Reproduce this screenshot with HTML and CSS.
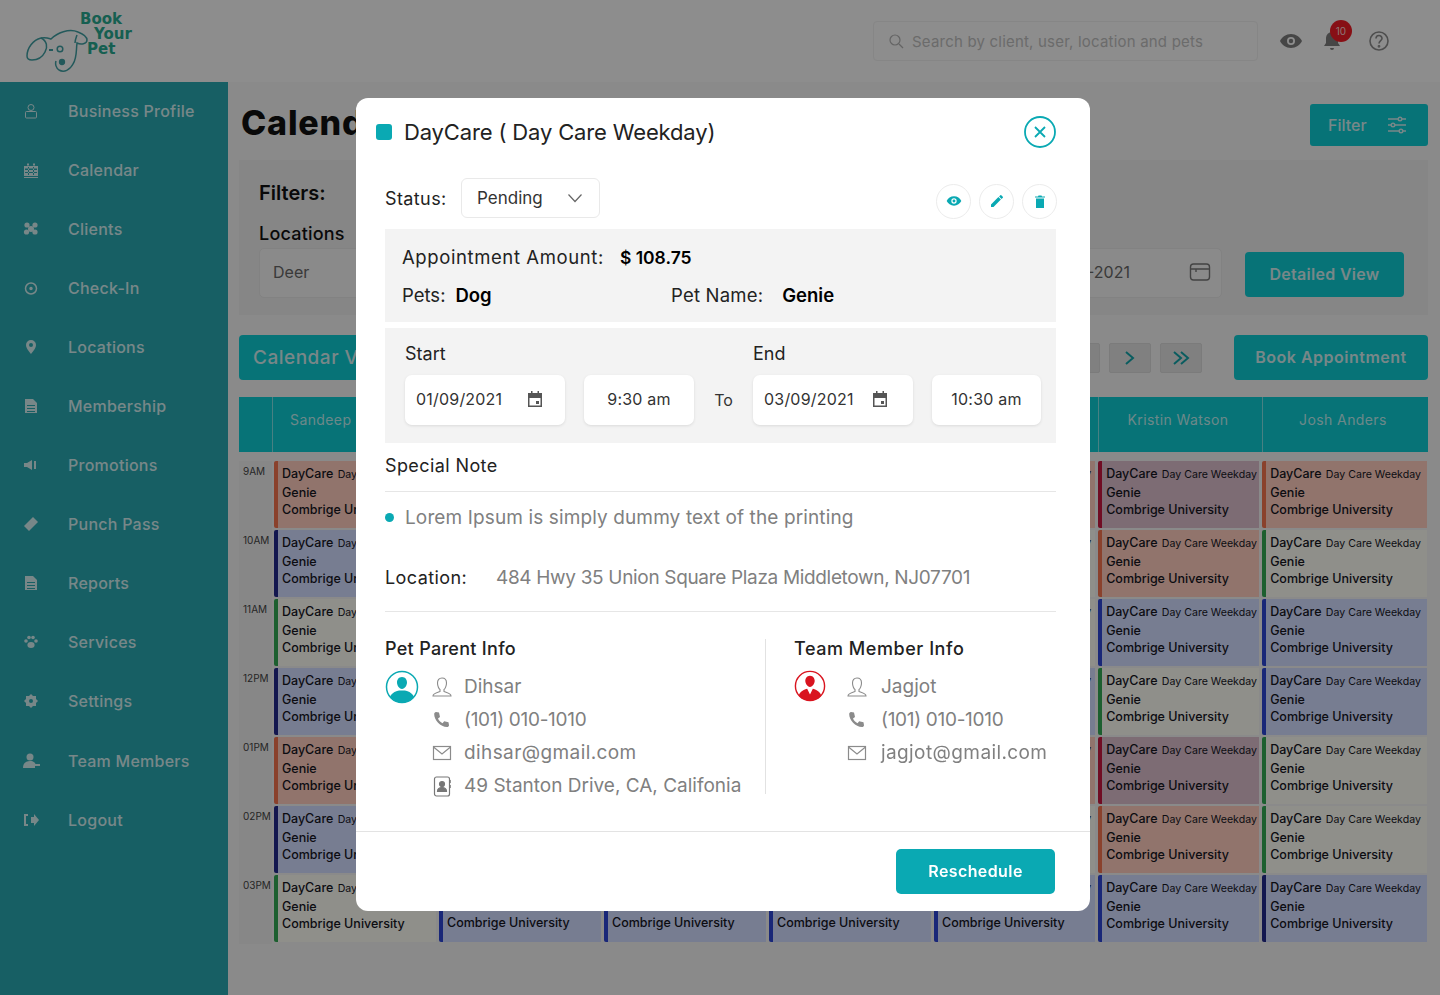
FILE: index.html
```html
<!DOCTYPE html>
<html lang="en">
<head>
    <meta charset="UTF-8">
    <meta name="viewport" content="width=device-width, initial-scale=1.0">
    <title>Book Your Pet - Calendar</title>
    <link rel="stylesheet" href="styles.css">
</head>
<body>
    <header class="topbar">
        <div class="logo">
            <svg class="logo-dog" width="66" height="50" viewBox="0 0 66 50" fill="none" stroke="#3f9da0" stroke-width="1.500">
                <path d="M2 33c0-8 6-16 14-18 5-1 7 0 10 1 6-6 18-11 27-7 5 2 9 5 9 8 0 4-6 5-10 3-1 8 0 15-4 21-3 6-9 9-14 6-3-2-4-6-3-9"/>
                <path d="M16 15c6 3 7 9 4 14-3 6-8 8-13 8-3 0-5-1-5-4"/>
                <path d="M24 27h4" stroke-width="2"/>
                <circle cx="35" cy="26" r="2.800"/>
                <path d="M52 12c-1 3-2 5-2 8"/>
                <circle cx="37" cy="39" r="2.400" fill="#3f9da0"/>
            </svg>
            <div class="logo-text">
                <span class="logo-l1">Book</span>
                <span class="logo-l2">Your</span>
                <span class="logo-l3">Pet</span>
            </div>
        </div>
        <div class="top-right">
            <div class="search">
                <svg width="16" height="16" viewBox="0 0 16 16" fill="none" stroke="#b0b0b0" stroke-width="1.200"><circle cx="7" cy="7" r="5"/><path d="M11 11l4 4"/></svg>
                <span>Search by client, user, location and pets</span>
            </div>
            <svg class="top-icon" width="24" height="24" viewBox="0 0 24 24" fill="#7c7c7c"><path d="M12 5C7 5 3 8 1 12c2 4 6 7 11 7s9-3 11-7c-2-4-6-7-11-7zm0 11a4 4 0 110-8 4 4 0 010 8z"/><circle cx="12" cy="12" r="2.200"/></svg>
            <div class="bell">
                <svg width="20" height="22" viewBox="0 0 20 22" fill="#7c7c7c"><path d="M10 2a6 6 0 00-6 6v5l-2 3h16l-2-3V8a6 6 0 00-6-6zM8 18a2 2 0 004 0z"/></svg>
                <span class="badge">10</span>
            </div>
            <svg class="top-icon" width="22" height="22" viewBox="0 0 22 22" fill="none" stroke="#8a8a8a" stroke-width="1.600"><circle cx="11" cy="11" r="9"/><path d="M8 8.500a3 3 0 116 0c0 2-3 2.400-3 5"/><circle cx="11" cy="16.300" r=".6"/></svg>
        </div>
    </header>

    <div class="layout">
        <nav class="sidebar">
            <a class="nav-item"><svg class="nav-icon" viewBox="0 0 16 16" fill="none" stroke="currentColor"><circle cx="8" cy="4.500" r="3"/><rect x="2.500" y="8.500" width="11" height="6.500" rx="1"/></svg>Business Profile</a>
            <a class="nav-item"><svg class="nav-icon" viewBox="0 0 16 16" fill="currentColor"><path fill-rule="evenodd" d="M1 4h14v10H1zM4 1.500h2V3.500H4zM10 1.500h2V3.500h-2zM2 6.500v1.500h12V6.500zM2 10v1h12v-1zM5 5v8h1V5zM10 5v8h1V5z"/><path d="M1 15h14v1H1z"/></svg>Calendar</a>
            <a class="nav-item"><svg class="nav-icon" viewBox="0 0 16 16" fill="currentColor"><circle cx="4" cy="4" r="2.600"/><circle cx="12" cy="4" r="2.600"/><circle cx="3.500" cy="11" r="2.600"/><circle cx="12" cy="11" r="2.600"/><circle cx="8" cy="8" r="3"/></svg>Clients</a>
            <a class="nav-item"><svg class="nav-icon" viewBox="0 0 16 16" fill="none" stroke="currentColor" stroke-width="1.500"><circle cx="8" cy="8.500" r="5.500"/><circle cx="8" cy="8.500" r="1" fill="currentColor"/></svg>Check-In</a>
            <a class="nav-item"><svg class="nav-icon" viewBox="0 0 16 16" fill="currentColor"><path d="M8 1a5 5 0 00-5 5c0 3.500 5 9 5 9s5-5.500 5-9a5 5 0 00-5-5zm0 7a2 2 0 110-4 2 2 0 010 4z"/></svg>Locations</a>
            <a class="nav-item"><svg class="nav-icon" viewBox="0 0 16 16" fill="currentColor"><path d="M2 1h8l4 4v10H2zM4 7v1h8V7zm0 3v1h8v-1zm0 3v1h8v-1z"/></svg>Membership</a>
            <a class="nav-item"><svg class="nav-icon" viewBox="0 0 16 16" fill="currentColor"><path d="M1 6h3l5-3v10L4 10H1zM11 4h2v8h-2z"/></svg>Promotions</a>
            <a class="nav-item"><svg class="nav-icon" viewBox="0 0 16 16" fill="currentColor"><path d="M10 1l5 5-9 9-5-5z"/></svg>Punch Pass</a>
            <a class="nav-item"><svg class="nav-icon" viewBox="0 0 16 16" fill="currentColor"><path d="M2 1h8l4 4v10H2zM4 7v1h8V7zm0 3v1h8v-1zm0 3v1h8v-1z"/></svg>Reports</a>
            <a class="nav-item"><svg class="nav-icon" viewBox="0 0 16 16" fill="currentColor"><ellipse cx="8" cy="11" rx="3.600" ry="3"/><circle cx="3" cy="7" r="1.800"/><circle cx="6" cy="3.500" r="1.800"/><circle cx="10" cy="3.500" r="1.800"/><circle cx="13" cy="7" r="1.800"/></svg>Services</a>
            <a class="nav-item"><svg class="nav-icon" viewBox="0 0 16 16" fill="currentColor"><path d="M8 1l2 2h3v3l2 2-2 2v3h-3l-2 2-2-2H3v-3L1 8l2-2V3h3zm0 5a2 2 0 100 4 2 2 0 000-4z"/></svg>Settings</a>
            <a class="nav-item"><svg class="nav-icon nav-icon-wide" viewBox="0 0 18 16" fill="currentColor"><circle cx="8" cy="4" r="3.500"/><path d="M1 15c0-5 3-7 7-7s5 2 5.500 3H18v2h-5v2z"/></svg>Team Members</a>
            <a class="nav-item"><svg class="nav-icon" viewBox="0 0 16 16" fill="currentColor"><path d="M1 2h4v2H3v8h2v2H1zM8 5h3V2l5 6-5 6v-3H8z"/></svg>Logout</a>
        </nav>

        <main class="content">
            <div class="title-row">
                <h1>Calendar</h1>
                <button class="btn-filter">Filter
                    <svg width="20" height="18" viewBox="0 0 20 18" fill="none" stroke="currentColor" stroke-width="1.400"><path d="M1 3h18M1 9h18M1 15h18"/><circle cx="13" cy="3" r="1.800" fill="#0dcbd2"/><circle cx="6" cy="9" r="1.800" fill="#0dcbd2"/><circle cx="14" cy="15" r="1.800" fill="#0dcbd2"/></svg>
                </button>
            </div>

            <section class="filters">
                <div class="filters-title">Filters:</div>
                <div class="filters-row">
                    <div class="field">
                        <label>Locations</label>
                        <div class="fake-input">Deer</div>
                    </div>
                    <div class="fake-input date-input">
                        <span>01-09-2021</span>
                        <svg width="22" height="20" viewBox="0 0 22 20" fill="none" stroke="#777" stroke-width="1.400"><rect x="1.500" y="2" width="19" height="16" rx="3"/><path d="M1.500 7h19M7 7v3"/></svg>
                    </div>
                    <button class="btn-teal btn-detail">Detailed View</button>
                </div>
            </section>

            <div class="toolbar">
                <button class="btn-teal btn-view">Calendar View</button>
                <div class="pager">
                    <span class="page-btn"></span>
                    <span class="page-btn">
                        <svg width="14" height="16" viewBox="0 0 14 16" fill="none" stroke="#12a3a8" stroke-width="2"><path d="M3 2l7 6-7 6"/></svg>
                    </span>
                    <span class="page-btn">
                        <svg width="20" height="16" viewBox="0 0 20 16" fill="none" stroke="#12a3a8" stroke-width="2"><path d="M3 2l7 6-7 6M10 2l7 6-7 6"/></svg>
                    </span>
                </div>
                <button class="btn-teal btn-book">Book Appointment</button>
            </div>

            <section class="calendar" id="calendar">
                <div class="cal-header">
                    <div class="cal-corner"></div>
                    <div class="cal-head cal-head-first">Sandeep</div>
                    <div class="cal-head"></div>
                    <div class="cal-head"></div>
                    <div class="cal-head"></div>
                    <div class="cal-head"></div>
                    <div class="cal-head">Kristin Watson</div>
                    <div class="cal-head">Josh Anders</div>
                </div>
            </section>
        </main>
    </div>

    <div class="overlay">
        <div class="modal">
            <div class="modal-top">
                <span class="modal-square"></span>
                <h2>DayCare ( Day Care Weekday)</h2>
                <button class="close-btn">
                    <svg width="32" height="32" viewBox="0 0 32 32" fill="none" stroke="#0aa9b3" stroke-width="1.800"><circle cx="16" cy="16" r="15"/><path d="M11 11l10 10M21 11L11 21"/></svg>
                </button>
            </div>

            <div class="status-row">
                <span class="status-label">Status:</span>
                <div class="status-select">Pending
                    <svg width="16" height="10" viewBox="0 0 16 10" fill="none" stroke="#666" stroke-width="1.200"><path d="M1.500 1.500L8 8.500l6.500-7"/></svg>
                </div>
                <div class="actions">
                    <span class="action"><svg width="16" height="16" viewBox="0 0 24 24" fill="#0aa9b3"><path d="M12 5C7 5 3 8 1 12c2 4 6 7 11 7s9-3 11-7c-2-4-6-7-11-7zm0 11a4 4 0 110-8 4 4 0 010 8z"/><circle cx="12" cy="12" r="2.200"/></svg></span>
                    <span class="action"><svg width="14" height="14" viewBox="0 0 14 14" fill="#0aa9b3"><path d="M1 10.500V13h2.500l7.400-7.400-2.500-2.500zM12.800 3.700a.7.7 0 000-1l-1.500-1.500a.7.7 0 00-1 0L9.100 2.400l2.500 2.500z"/></svg></span>
                    <span class="action"><svg width="10" height="13" viewBox="0 0 10 13" fill="#0aa9b3"><path d="M1 3.500h8V13H1zM0 1.500h3L3.500.5h3l.5 1h3v1H0z"/></svg></span>
                </div>
            </div>

            <div class="panel amount-panel">
                <div class="amount-row">
                    <span class="amount-label">Appointment Amount:</span>
                    <strong>$ 108.75</strong>
                </div>
                <div class="pets-row">
                    <div class="pets-col"><span>Pets:</span><strong>Dog</strong></div>
                    <div class="pets-col pets-name"><span>Pet Name:</span><strong>Genie</strong></div>
                </div>
            </div>

            <div class="panel dates-panel">
                <div class="date-labels">
                    <span class="date-start">Start</span>
                    <span>End</span>
                </div>
                <div class="date-fields">
                    <div class="white-field date-field">01/09/2021
                        <svg width="18" height="18" viewBox="0 0 18 18" fill="#555"><path d="M2 3h3V1h1.500v2h5V1H13v2h3v14H2zm1.500 5v7.500h11V8zm6.500 3h3v3h-3z" fill-rule="evenodd"/></svg>
                    </div>
                    <div class="white-field time-field time-start">9:30 am</div>
                    <span class="to">To</span>
                    <div class="white-field date-field date-end">03/09/2021
                        <svg width="18" height="18" viewBox="0 0 18 18" fill="#555"><path d="M2 3h3V1h1.500v2h5V1H13v2h3v14H2zm1.500 5v7.500h11V8zm6.500 3h3v3h-3z" fill-rule="evenodd"/></svg>
                    </div>
                    <div class="white-field time-field time-end">10:30 am</div>
                </div>
            </div>

            <div class="note-title">Special Note</div>
            <div class="note-body"><span class="dot"></span>Lorem Ipsum is simply dummy text of the printing</div>

            <div class="location-row">
                <span class="location-label">Location:</span>
                <span class="location-text">484 Hwy 35 Union Square Plaza Middletown, NJ07701</span>
            </div>

            <div class="info">
                <div class="info-col info-parent">
                    <h3>Pet Parent Info</h3>
                    <div class="info-body">
                        <svg class="avatar" width="34" height="34" viewBox="0 0 34 34"><circle cx="17" cy="17" r="15.500" fill="#fff" stroke="#0aa9b3" stroke-width="1.500"/><path d="M17 7c3.500 0 5 3 5 5.500S20 19 17 19s-5-4-5-6.500S13.500 7 17 7zM5 27c2-5 7-6 9-6.500h6c2 .5 7 1.500 9 6.500a15.500 15.500 0 01-24 0z" fill="#0aa9b3"/></svg>
                        <ul class="info-list">
                            <li><svg width="22" height="22" viewBox="0 0 22 22" fill="none" stroke="#8b8b8b" stroke-width="1.100"><path d="M11 2c3 0 4.500 2.200 4.500 5s-1.500 6-2.500 6.500v2c2 1 7 1.500 7 4.500H2c0-3 5-3.500 7-4.500v-2C8 13 6.500 10 6.500 7S8 2 11 2z"/></svg>Dihsar</li>
                            <li class="info-phone"><svg width="22" height="22" viewBox="0 0 22 22" fill="#8b8b8b"><path d="M5 3l3 .5 1 4.500-2 1.500c.8 2 2.500 3.800 4.500 4.700l1.700-2 4.300 1 .5 3c0 1-1 1.800-2 1.800C9.500 18 3 11 3.200 5 3.200 4 4 3 5 3z"/></svg>(101) 010-1010</li>
                            <li class="info-email"><svg width="22" height="22" viewBox="0 0 22 22" fill="none" stroke="#8b8b8b" stroke-width="1.200"><rect x="2.500" y="4.500" width="17" height="13"/><path d="M2.500 5L11 12l8.500-7"/></svg>dihsar@gmail.com</li>
                            <li><svg width="22" height="22" viewBox="0 0 22 22" fill="none" stroke="#777" stroke-width="1.200"><rect x="3.500" y="2" width="15" height="19" rx="2"/><path d="M19 5v3M19 10v3" stroke-width="1.500"/><circle cx="11" cy="9" r="2.500" fill="#777"/><path d="M6.500 16.500c0-3 2-4 4.500-4s4.500 1 4.500 4z" fill="#777"/></svg>49 Stanton Drive, CA, Califonia</li>
                        </ul>
                    </div>
                </div>
                <div class="info-col info-team">
                    <h3>Team Member Info</h3>
                    <div class="info-body">
                        <svg class="avatar" width="32" height="32" viewBox="0 0 34 34"><circle cx="17" cy="17" r="15.500" fill="#fff" stroke="#d9141f" stroke-width="1.500"/><path d="M17 6c3.500 0 5 3 5 5.500S20 18 17 18s-5-4-5-6.500S13.500 6 17 6zM5 27c2-5 6-6 9-7l3 6 3-6c3 1 7 2 9 7a15.500 15.500 0 01-24 0z" fill="#d9141f"/></svg>
                        <ul class="info-list team-list">
                            <li><svg width="22" height="22" viewBox="0 0 22 22" fill="none" stroke="#8b8b8b" stroke-width="1.100"><path d="M11 2c3 0 4.500 2.200 4.500 5s-1.500 6-2.500 6.500v2c2 1 7 1.500 7 4.500H2c0-3 5-3.500 7-4.500v-2C8 13 6.500 10 6.500 7S8 2 11 2z"/></svg>Jagjot</li>
                            <li class="info-phone"><svg width="22" height="22" viewBox="0 0 22 22" fill="#8b8b8b"><path d="M5 3l3 .5 1 4.500-2 1.500c.8 2 2.500 3.800 4.500 4.700l1.700-2 4.300 1 .5 3c0 1-1 1.800-2 1.800C9.500 18 3 11 3.200 5 3.200 4 4 3 5 3z"/></svg>(101) 010-1010</li>
                            <li class="info-email"><svg width="22" height="22" viewBox="0 0 22 22" fill="none" stroke="#8b8b8b" stroke-width="1.200"><rect x="2.500" y="4.500" width="17" height="13"/><path d="M2.500 5L11 12l8.500-7"/></svg>jagjot@gmail.com</li>
                        </ul>
                    </div>
                </div>
            </div>

            <div class="modal-foot">
                <button class="btn-reschedule">Reschedule</button>
            </div>
        </div>
    </div>

    <script src="script.js"></script>
</body>
</html>
```

FILE: styles.css
```css
* {
    box-sizing: border-box;
}
html, body {
    margin: 0;
    height: 100%;
    overflow: hidden;
}
body {
    font-family: "Inter", "Liberation Sans", sans-serif;
    background-color: #f3f3f3;
    color: #111;
}
button {
    font-family: inherit;
    border: none;
    cursor: pointer;
}
h1, h2, h3 {
    margin: 0;
}

/* top bar */
.topbar {
    height: 82px;
    background-color: #f8f8f8;
    display: flex;
    align-items: center;
    justify-content: space-between;
    padding: 0 50px 0 25px;
}
.logo {
    display: flex;
    align-items: flex-start;
    height: 62px;
}
.logo-dog {
    margin-top: 13px;
}
.logo-text {
    display: flex;
    flex-direction: column;
    margin-left: -11px;
    margin-top: 2px;
    font-family: "DejaVu Sans", sans-serif;
    font-weight: 700;
    font-size: 15px;
    line-height: 15px;
    color: #28a88f;
}
.logo-l2 {
    margin-left: 14px;
}
.logo-l3 {
    margin-left: 7px;
}
.top-right {
    display: flex;
    align-items: center;
}
.search {
    width: 385px;
    height: 40px;
    margin-right: 21px;
    padding: 0 14px;
    display: flex;
    align-items: center;
    gap: 8px;
    border: 1px solid #ebebeb;
    border-radius: 4px;
    font-size: 15px;
    letter-spacing: 0.2px;
    color: #bdbdbd;
}
.bell {
    position: relative;
    margin: 0 26px 0 19px;
    height: 22px;
}
.badge {
    position: absolute;
    top: -10px;
    left: 8px;
    width: 22px;
    height: 22px;
    border-radius: 50%;
    background-color: #ee1c25;
    color: #f7d0d0;
    font-size: 10px;
    line-height: 22px;
    text-align: center;
}

/* page layout */
.layout {
    display: flex;
    height: 913px;
}
.sidebar {
    width: 228px;
    flex: none;
    background-color: #2aa8b0;
}
.nav-item {
    height: 59.1px;
    display: flex;
    align-items: center;
    padding: 0 0 2px 23px;
    color: #d3eef0;
    font-size: 16px;
    font-weight: 500;
    letter-spacing: 0.25px;
}
.nav-icon {
    width: 16px;
    height: 16px;
    margin-right: 29px;
    flex: none;
}
.nav-icon-wide {
    width: 18px;
    margin-left: -1px;
    margin-right: 28px;
}
.content {
    flex: 1;
    padding: 22px 12px 0 11px;
}
.title-row {
    display: flex;
    justify-content: space-between;
    align-items: flex-start;
    height: 56px;
}
h1 {
    font-size: 34px;
    font-weight: 800;
    line-height: 40px;
    letter-spacing: 0.8px;
    margin: -1px 0 0 2px;
}
.btn-filter {
    width: 118px;
    height: 42px;
    background-color: #0dcbd2;
    color: #d3eef0;
    border-radius: 3px;
    font-size: 16px;
    font-weight: 500;
    display: flex;
    align-items: center;
    justify-content: space-between;
    padding: 0 21px 0 18px;
}

/* filters */
.filters {
    height: 155px;
    background-color: #ececec;
    padding: 21px 24px 0 20px;
}
.filters-title {
    font-size: 20px;
    font-weight: 600;
    line-height: 24px;
    margin-bottom: 17px;
}
.filters-row {
    display: flex;
    align-items: flex-end;
}
.field label {
    display: block;
    font-size: 18px;
    line-height: 24px;
    font-weight: 500;
    letter-spacing: 0.2px;
    margin-bottom: 2px;
}
.fake-input {
    height: 50px;
    border: 1px solid #e4e4e4;
    border-radius: 5px;
    background-color: #f3f3f3;
    display: flex;
    align-items: center;
    font-size: 16px;
    color: #666;
    padding: 0 13px 2px;
}
.field .fake-input {
    width: 300px;
}
.date-input {
    margin-left: auto;
    width: 195px;
    justify-content: space-between;
    padding: 0 10px 2px 15px;
}
.btn-teal {
    background-color: #0dcbd2;
    color: #d3eef0;
    border-radius: 4px;
    font-size: 16px;
    font-weight: 600;
    height: 45px;
    padding-bottom: 2px;
}
.btn-detail {
    width: 159px;
    margin-left: 23px;
    margin-bottom: 1px;
    letter-spacing: 0.3px;
}

/* toolbar above the grid */
.toolbar {
    display: flex;
    align-items: center;
    margin-top: 20px;
    height: 45px;
}
.btn-view {
    width: 240px;
    font-size: 19px;
    font-weight: 500;
    letter-spacing: 0.5px;
    text-align: left;
    padding-left: 14px;
}
.pager {
    margin-left: auto;
    display: flex;
    gap: 9px;
    margin-right: 32px;
    margin-top: 1px;
}
.page-btn {
    width: 42px;
    height: 30px;
    background-color: #e2e2e2;
    border: 1px solid #d8d8d8;
    border-radius: 2px;
    display: flex;
    align-items: center;
    justify-content: center;
}
.btn-book {
    width: 194px;
    letter-spacing: 0.5px;
}

/* calendar grid */
.calendar {
    display: grid;
    grid-template-columns: 33px repeat(4, 165px) 164.2px 164px 1fr;
    grid-template-rows: 64px;
    grid-auto-rows: 69px;
    margin-top: 17px;
    width: 1189px;
}
.cal-header {
    grid-column: 1 / -1;
    display: grid;
    grid-template-columns: 33px repeat(5, 165.2px) 164px 1fr;
    height: 55px;
    background-color: #0dcbd2;
}
.cal-head {
    border-left: 1px solid #7fe3e7;
    color: #bfeff1;
    font-size: 14px;
    letter-spacing: 0.4px;
    display: flex;
    align-items: center;
    justify-content: center;
    padding-bottom: 10px;
    padding-right: 5px;
    white-space: nowrap;
}
.cal-head-first {
    justify-content: flex-start;
    padding-left: 17px;
}
.time-cell {
    font-size: 10px;
    color: #444;
    padding: 4px 0 0 4px;
    background-color: #eeeeee;
    white-space: nowrap;
}
.event {
    margin: 0 1px 2px 2px;
    padding: 4px 0 0 4px;
    border-left: 4px solid;
    border-radius: 2px 0 0 2px;
    font-size: 12.5px;
    line-height: 17.5px;
    font-weight: 500;
    white-space: nowrap;
    overflow: hidden;
    color: #16161f;
}
.event small {
    font-size: 10.6px;
    font-weight: 400;
    margin-left: 1px;
}
.event .tail {
    display: block;
    text-align: right;
    padding-right: 4px;
}
.ev-orange { border-color: #f3734e; background-color: #ffcdbe; }
.ev-blue { border-color: #2d45d4; background-color: #d2dcff; }
.ev-navy { border-color: #22298c; background-color: #d2dcff; }
.ev-green { border-color: #32a854; background-color: #fbfbf3; }
.ev-red { border-color: #c6163e; background-color: #dcbecd; }

/* modal */
.overlay {
    position: fixed;
    inset: 0;
    background-color: rgba(0, 0, 0, 0.43);
}
.modal {
    position: absolute;
    left: 356px;
    top: 98px;
    width: 734px;
    height: 813px;
    background-color: #fff;
    border-radius: 12px;
    display: flex;
    flex-direction: column;
    padding: 0 34px 0 29px;
}
.modal-top {
    display: flex;
    align-items: center;
    height: 68px;
    margin-left: -9px;
}
.modal-square {
    width: 16px;
    height: 16px;
    border-radius: 3px;
    background-color: #0aa9b3;
    margin-right: 12px;
}
h2 {
    font-size: 22px;
    font-weight: 400;
    letter-spacing: -0.15px;
    color: #222;
    flex: 1;
}
.close-btn {
    background: none;
    padding: 0;
    height: 32px;
}
.status-row {
    display: flex;
    align-items: center;
    height: 40px;
    margin-top: 12px;
}
.status-label {
    font-size: 18px;
    letter-spacing: 0.4px;
    color: #222;
    width: 76px;
}
.status-select {
    width: 139px;
    height: 40px;
    border: 1px solid #e9e9e9;
    border-radius: 6px;
    display: flex;
    align-items: center;
    justify-content: space-between;
    padding: 0 16px 0 15px;
    font-size: 17px;
    color: #333;
}
.actions {
    margin-left: auto;
    display: flex;
    gap: 8px;
    margin-top: 6px;
    margin-right: -1px;
}
.action {
    width: 35px;
    height: 35px;
    border: 1px solid #ececec;
    border-radius: 50%;
    display: flex;
    align-items: center;
    justify-content: center;
}
.panel {
    background-color: #f3f3f3;
    width: 671px;
}
.amount-panel {
    margin-top: 11px;
    height: 93px;
    padding: 13px 17px 0;
    font-size: 18.5px;
    color: #222;
}
.amount-panel strong {
    font-weight: 600;
    color: #000;
}
.amount-label {
    letter-spacing: 0.6px;
}
.amount-row {
    display: flex;
    gap: 16px;
    height: 30px;
    align-items: center;
}
.amount-row strong {
    font-size: 17.5px;
}
.pets-row {
    display: flex;
    margin-top: 8px;
    height: 30px;
    align-items: center;
}
.pets-col {
    display: flex;
    gap: 10px;
    width: 269px;
}
.pets-name {
    gap: 19px;
}
.pets-name span {
    letter-spacing: 0.2px;
}
.dates-panel {
    margin-top: 6px;
    height: 115px;
    padding: 12px 15px 0 20px;
}
.date-labels {
    display: flex;
    font-size: 18px;
    color: #222;
    height: 26px;
    align-items: center;
}
.date-start {
    width: 348px;
}
.date-fields {
    display: flex;
    align-items: center;
    margin-top: 9px;
}
.white-field {
    height: 50px;
    background-color: #fff;
    border-radius: 7px;
    box-shadow: 0 1px 3px rgba(0, 0, 0, 0.1);
    display: flex;
    align-items: center;
    font-size: 16px;
    letter-spacing: 0.2px;
    color: #333;
    padding-bottom: 2px;
}
.date-field {
    width: 160px;
    padding: 0 21px 2px 11px;
    justify-content: space-between;
}
.date-end {
    padding-right: 24px;
}
.time-field {
    justify-content: center;
}
.time-start {
    width: 110px;
    margin-left: 19px;
}
.time-end {
    width: 109px;
    margin-left: 19px;
}
.to {
    width: 59px;
    text-align: center;
    font-size: 16px;
    color: #333;
}
.note-title {
    font-size: 18px;
    letter-spacing: 0.4px;
    color: #222;
    height: 49px;
    line-height: 45px;
    width: 671px;
    border-bottom: 1px solid #e6e6e6;
}
.note-body {
    display: flex;
    align-items: center;
    height: 51px;
    font-size: 19px;
    letter-spacing: 0.12px;
    color: #808080;
}
.dot {
    width: 9px;
    height: 9px;
    border-radius: 50%;
    background-color: #0aa9b3;
    margin-right: 11px;
}
.location-row {
    display: flex;
    align-items: center;
    height: 69px;
    width: 671px;
    border-bottom: 1px solid #e6e6e6;
}
.location-label {
    font-size: 18px;
    letter-spacing: 0.4px;
    color: #222;
    width: 111px;
}
.location-text {
    font-size: 19px;
    letter-spacing: -0.33px;
    color: #808080;
}
.info {
    display: flex;
    margin-top: 27px;
    height: 155px;
}
.info-col h3 {
    font-size: 18px;
    font-weight: 500;
    letter-spacing: 0.3px;
    color: #222;
    line-height: 20px;
}
.info-team h3 {
    letter-spacing: 0.55px;
}
.info-parent {
    width: 381px;
    border-right: 1px solid #e2e2e2;
}
.info-team {
    padding-left: 28px;
}
.info-body {
    display: flex;
    align-items: flex-start;
    margin-top: 11px;
}
.avatar {
    flex: none;
    margin-right: 12px;
}
.info-list {
    list-style: none;
    margin: 0;
    padding: 0;
}
.team-list {
    margin-left: 8px;
}
.info-list li {
    display: flex;
    align-items: center;
    gap: 11px;
    height: 33px;
    font-size: 19px;
    color: #808080;
    white-space: nowrap;
}
.team-list li {
    gap: 13px;
}
.info-list .info-email {
    letter-spacing: 0.4px;
}
.info-list .info-phone {
    letter-spacing: -0.3px;
}
.info-list svg {
    flex: none;
}
.modal-foot {
    margin: 37px -34px 0 -29px;
    border-top: 1px solid #e3e3e3;
    padding: 17px 35px 0 0;
    display: flex;
    justify-content: flex-end;
}
.btn-reschedule {
    width: 159px;
    height: 45px;
    border-radius: 5px;
    background-color: #0aa9b3;
    color: #fff;
    font-size: 16px;
    font-weight: 600;
    letter-spacing: 0.4px;
    padding-bottom: 2px;
}
```

FILE: script.js
```js
// Fill the calendar rows
var hours = ['9AM', '10AM', '11AM', '12PM', '01PM', '02PM', '03PM'];
var colors = [
    ['orange', 'blue', 'blue', 'blue', 'orange', 'red', 'orange'],
    ['navy', 'blue', 'blue', 'blue', 'green', 'orange', 'green'],
    ['green', 'blue', 'blue', 'blue', 'green', 'blue', 'blue'],
    ['navy', 'blue', 'blue', 'blue', 'blue', 'green', 'blue'],
    ['orange', 'blue', 'blue', 'blue', 'orange', 'red', 'green'],
    ['navy', 'blue', 'blue', 'blue', 'green', 'orange', 'green'],
    ['green', 'blue', 'blue', 'blue', 'blue', 'blue', 'navy']
];
var fullText = 'DayCare <small>Day Care Weekday</small><br>Genie<br>Combrige University';
var calendar = document.getElementById('calendar');

hours.forEach(function (hour, i) {
    var time = document.createElement('div');
    time.className = 'time-cell';
    time.textContent = hour;
    calendar.appendChild(time);

    colors[i].forEach(function (color, col) {
        var event = document.createElement('div');
        event.className = 'event ev-' + color;
        // the middle columns sit behind the modal, only the end of each line shows
        if (col >= 1 && col <= 3) {
            event.innerHTML = i === 6 ? '<br><br>Combrige University' : '';
        } else if (col === 4) {
            event.innerHTML = '<small class="tail">Weekday</small>' + (i === 6 ? '<br>Combrige University' : '');
        } else {
            event.innerHTML = fullText;
        }
        calendar.appendChild(event);
    });
});
```
